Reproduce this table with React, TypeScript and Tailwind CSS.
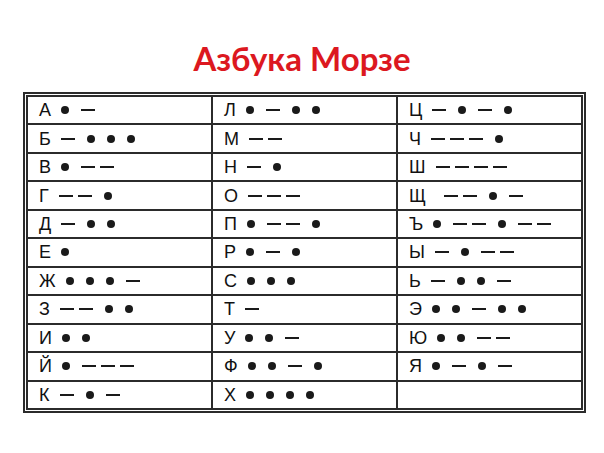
import React from "react";

const columns: [string, string][][] = [
  [
    ["А", ".-"],
    ["Б", "-..."],
    ["В", ".--"],
    ["Г", "--."],
    ["Д", "-.."],
    ["Е", "."],
    ["Ж", "...-"],
    ["З", "--.."],
    ["И", ".."],
    ["Й", ".---"],
    ["К", "-.-"],
  ],
  [
    ["Л", ".-.."],
    ["М", "--"],
    ["Н", "-."],
    ["О", "---"],
    ["П", ".--."],
    ["Р", ".-."],
    ["С", "..."],
    ["Т", "-"],
    ["У", "..-"],
    ["Ф", "..-."],
    ["Х", "...."],
  ],
  [
    ["Ц", "-.-."],
    ["Ч", "---."],
    ["Ш", "----"],
    ["Щ", "--.-"],
    ["Ъ", ".--.--"],
    ["Ы", "-.--"],
    ["Ь", "-..-"],
    ["Э", "..-.."],
    ["Ю", "..--"],
    ["Я", ".-.-"],
    ["", ""],
  ],
];

function Code({ code, wide }: { code: string; wide?: boolean }) {
  const items: React.ReactNode[] = [];
  for (let i = 0; i < code.length; i++) {
    const c = code[i];
    const prev = i > 0 ? code[i - 1] : "";
    let ml = "ml-[12px]";
    if (i === 0) ml = wide ? "ml-[18px]" : "ml-[10px]";
    else if (prev === "-" && c === "-") ml = "ml-[5px]";
    if (c === ".") {
      items.push(
        <span
          key={i}
          className={`${ml} inline-block w-[8px] h-[8px] rounded-full bg-[#1a1a1a] shrink-0`}
        />
      );
    } else {
      items.push(
        <span
          key={i}
          className={`${ml} inline-block w-[14px] h-[2px] bg-[#1a1a1a] shrink-0`}
        />
      );
    }
  }
  return <>{items}</>;
}

export default function App() {
  const cells: [string, string][] = [];
  columns.forEach((col) => col.forEach((c) => cells.push(c)));
  return (
    <div className="w-[604px] h-[453px] bg-white flex flex-col items-center">
      <div
        className="mt-[38px] h-[40px] leading-[40px] text-[33px] font-bold text-[#dc1820]"
        style={{ fontFamily: "Lato, 'Open Sans', sans-serif" }}
      >
        Азбука Морзе
      </div>
      <div className="mt-[14px] self-start ml-[23px] w-[563px] h-[321px] border-2 border-[#2b2b2b] p-[1px]">
        <div className="w-full h-full border-2 border-[#2b2b2b] bg-[#2b2b2b] grid grid-cols-3 grid-rows-[repeat(11,1fr)] grid-flow-col gap-[2px]">
          {cells.map(([letter, code], idx) => (
            <div
              key={idx}
              className="bg-white flex items-center pl-[11px] text-[18px] leading-none text-[#111]"
              style={{ fontFamily: "'Liberation Sans', Arial, sans-serif" }}
            >
              {letter && <span className="leading-none">{letter}</span>}
              <Code code={code} wide={letter === "Щ"} />
            </div>
          ))}
        </div>
      </div>
    </div>
  );
}
